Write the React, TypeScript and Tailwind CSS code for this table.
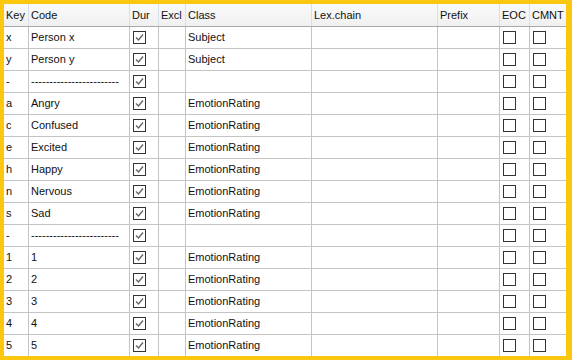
import React from 'react';

type Row = { key: string; code: string; cls: string };

const ROWS: Row[] = [
  { key: 'x', code: 'Person x', cls: 'Subject' },
  { key: 'y', code: 'Person y', cls: 'Subject' },
  { key: '-', code: '------------------------', cls: '' },
  { key: 'a', code: 'Angry', cls: 'EmotionRating' },
  { key: 'c', code: 'Confused', cls: 'EmotionRating' },
  { key: 'e', code: 'Excited', cls: 'EmotionRating' },
  { key: 'h', code: 'Happy', cls: 'EmotionRating' },
  { key: 'n', code: 'Nervous', cls: 'EmotionRating' },
  { key: 's', code: 'Sad', cls: 'EmotionRating' },
  { key: '-', code: '------------------------', cls: '' },
  { key: '1', code: '1', cls: 'EmotionRating' },
  { key: '2', code: '2', cls: 'EmotionRating' },
  { key: '3', code: '3', cls: 'EmotionRating' },
  { key: '4', code: '4', cls: 'EmotionRating' },
  { key: '5', code: '5', cls: 'EmotionRating' },
];

const Box = ({ checked }: { checked?: boolean }) => (
  <svg width="13" height="13" viewBox="0 0 13 13" className="block">
    <rect x="0.5" y="0.5" width="12" height="12" fill="white" stroke="#333" strokeWidth="1" />
    {checked && <path d="M3 6.5 L5.5 9 L10 3.5" fill="none" stroke="#666" strokeWidth="1.4" />}
  </svg>
);

const hd = 'h-[22px] flex items-center pl-[2px] border-r border-[#d5e0ea] shrink-0';
const cell = 'h-[21px] flex items-center pl-[2px] border-r border-[#c4c4c4] shrink-0';

const App: React.FC = () => {
  return (
    <div className="w-[572px] h-[360px] bg-[#fcc80f] pt-[4px] pl-[4px] pr-[6px] pb-[4px] overflow-hidden">
      <div
        className="w-[562px] h-[352px] bg-white overflow-hidden text-[11px] text-[#111]"
        style={{ fontFamily: '"Liberation Sans", Arial, sans-serif' }}
      >
        <div className="flex bg-gradient-to-b from-[#fafafa] to-[#f0f0f0] border-b border-[#a8a8a8]">
          <div className={`${hd} w-[25px]`}>Key</div>
          <div className={`${hd} w-[101px]`}>Code</div>
          <div className={`${hd} w-[29px]`}>Dur</div>
          <div className={`${hd} w-[27px]`}>Excl</div>
          <div className={`${hd} w-[126px]`}>Class</div>
          <div className={`${hd} w-[126px]`}>Lex.chain</div>
          <div className={`${hd} w-[62px]`}>Prefix</div>
          <div className={`${hd} w-[30px]`}>EOC</div>
          <div className="h-[22px] flex items-center pl-[2px] w-[36px]">CMNT</div>
        </div>
        {ROWS.map((r, i) => (
          <div key={i} className="flex border-b border-[#c4c4c4]">
            <div className={`${cell} w-[25px]`}>{r.key}</div>
            <div className={`${cell} w-[101px]`}>{r.code}</div>
            <div className={`${cell} w-[29px] pl-[3px]`}>
              <Box checked />
            </div>
            <div className={`${cell} w-[27px]`}></div>
            <div className={`${cell} w-[126px]`}>{r.cls}</div>
            <div className={`${cell} w-[126px]`}></div>
            <div className={`${cell} w-[62px]`}></div>
            <div className={`${cell} w-[30px] pl-[3px]`}>
              <Box />
            </div>
            <div className="h-[21px] flex items-center pl-[3px] w-[36px]">
              <Box />
            </div>
          </div>
        ))}
      </div>
    </div>
  );
};

export default App;
